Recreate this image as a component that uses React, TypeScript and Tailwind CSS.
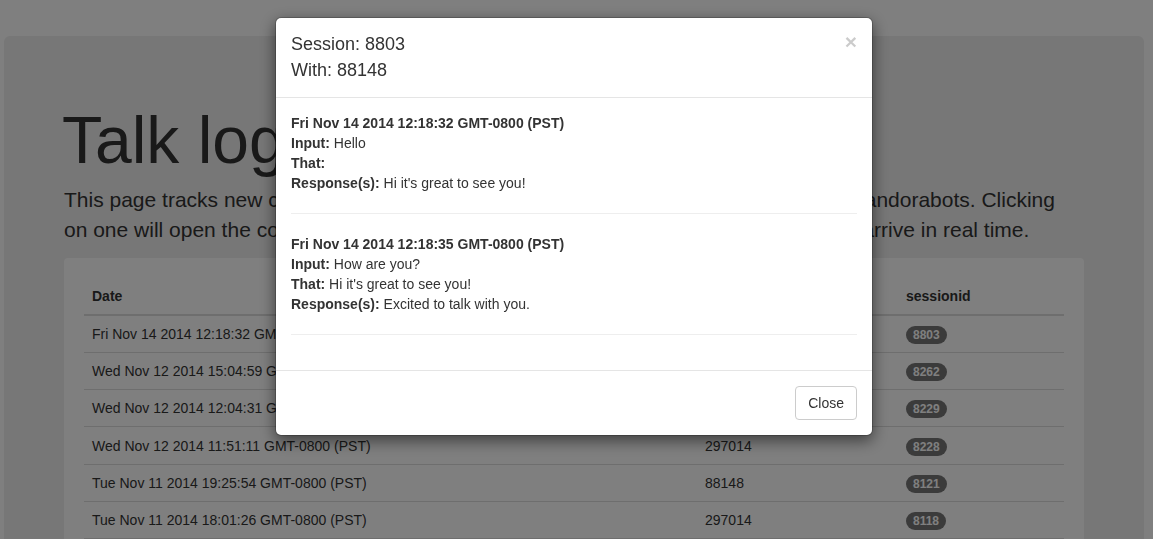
import { Fragment } from 'react'

interface LogRow {
  date: string
  client: string
  session: string
}

interface Exchange {
  time: string
  input: string
  that: string
  response: string
}

const rows: LogRow[] = [
  { date: 'Fri Nov 14 2014 12:18:32 GMT-0800 (PST)', client: '88148', session: '8803' },
  { date: 'Wed Nov 12 2014 15:04:59 GMT-0800 (PST)', client: '297014', session: '8262' },
  { date: 'Wed Nov 12 2014 12:04:31 GMT-0800 (PST)', client: '297014', session: '8229' },
  { date: 'Wed Nov 12 2014 11:51:11 GMT-0800 (PST)', client: '297014', session: '8228' },
  { date: 'Tue Nov 11 2014 19:25:54 GMT-0800 (PST)', client: '88148', session: '8121' },
  { date: 'Tue Nov 11 2014 18:01:26 GMT-0800 (PST)', client: '297014', session: '8118' },
]

const exchanges: Exchange[] = [
  {
    time: 'Fri Nov 14 2014 12:18:32 GMT-0800 (PST)',
    input: 'Hello',
    that: '',
    response: "Hi it's great to see you!",
  },
  {
    time: 'Fri Nov 14 2014 12:18:35 GMT-0800 (PST)',
    input: 'How are you?',
    that: "Hi it's great to see you!",
    response: 'Excited to talk with you.',
  },
]

function SessionModal() {
  return (
    <div className="fixed inset-0 z-10 bg-black/50">
      <div className="ml-[275px] mt-[17px] w-[598px] rounded-[6px] border border-black/20 bg-white bg-clip-padding shadow-[0_5px_15px_rgba(0,0,0,0.5)]">
        {/* header */}
        <div className="flex items-start justify-between border-b border-[#e5e5e5] px-[15px] pt-[14px] pb-[14px]">
          <h4 className="text-[18px] leading-[25.5px] font-medium text-[#333]">
            Session: 8803
            <br />
            With: 88148
          </h4>
          <button
            type="button"
            className="mt-[-1px] text-[21px] leading-none font-bold text-black opacity-20 [text-shadow:0_1px_0_#fff]"
          >
            ×
          </button>
        </div>

        {/* body */}
        <div className="px-[15px] py-[15px] text-[14px] leading-[20px] text-[#333]">
          {exchanges.map((ex) => (
            <Fragment key={ex.time}>
              <div>
                <div className="font-bold">{ex.time}</div>
                <div>
                  <span className="font-bold">Input:</span> {ex.input}
                </div>
                <div>
                  <span className="font-bold">That:</span> {ex.that}
                </div>
                <div>
                  <span className="font-bold">Response(s):</span> {ex.response}
                </div>
              </div>
              <hr className="my-[20px] border-t border-[#eee]" />
            </Fragment>
          ))}
        </div>

        {/* footer */}
        <div className="flex justify-end border-t border-[#e5e5e5] p-[15px]">
          <button
            type="button"
            className="rounded-[4px] border border-[#ccc] bg-white px-[12px] py-[6px] text-[14px] leading-[20px] text-[#333]"
          >
            Close
          </button>
        </div>
      </div>
    </div>
  )
}

export default function App() {
  return (
    <div className="relative h-screen overflow-hidden bg-white font-['Liberation_Sans',Arial,sans-serif] text-[14px] text-[#333]">
      <div className="ml-[4px] mt-[36px] w-[1140px] rounded-[6px] bg-[#eee] px-[60px] pt-[48px] pb-[48px]">
        <h1 className="mt-[20px] mb-[8px] -ml-[2px] text-[66px] leading-[1.1] font-medium text-[#333]">
          Talk logs
        </h1>
        <p className="mb-[13px] text-[21px] leading-[30px] font-light whitespace-nowrap">
          This page tracks new conversations as they come from users talking to your bots on Pandorabots. Clicking
          <br />
          on one will open the conversation log for that session. New messages and replies will arrive in real time.
        </p>

        <div className="rounded-[4px] bg-white p-[20px]">
          <table className="w-[980px] text-left">
            <thead>
              <tr>
                <th className="w-[613px] border-b-2 border-[#ddd] p-[8px] leading-[20px] font-bold">Date</th>
                <th className="w-[201px] border-b-2 border-[#ddd] p-[8px] leading-[20px] font-bold">client_name</th>
                <th className="border-b-2 border-[#ddd] p-[8px] leading-[20px] font-bold">sessionid</th>
              </tr>
            </thead>
            <tbody>
              {rows.map((row) => (
                <tr key={row.session}>
                  <td className="border-t border-b border-[#ddd] p-[8px] leading-[20px]">{row.date}</td>
                  <td className="border-t border-b border-[#ddd] p-[8px] leading-[20px]">{row.client}</td>
                  <td className="border-t border-b border-[#ddd] p-[8px] leading-[20px]">
                    <span className="inline-block rounded-[10px] bg-[#777] px-[7px] py-[3px] align-middle text-[12px] leading-none font-bold text-white">
                      {row.session}
                    </span>
                  </td>
                </tr>
              ))}
            </tbody>
          </table>
        </div>
      </div>

      <SessionModal />
    </div>
  )
}
